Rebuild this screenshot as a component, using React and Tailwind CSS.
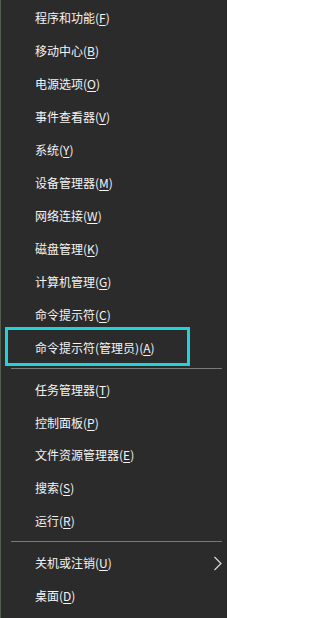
const groups = [
  [
    ['程序和功能', 'F'],
    ['移动中心', 'B'],
    ['电源选项', 'O'],
    ['事件查看器', 'V'],
    ['系统', 'Y'],
    ['设备管理器', 'M'],
    ['网络连接', 'W'],
    ['磁盘管理', 'K'],
    ['计算机管理', 'G'],
    ['命令提示符', 'C'],
    ['命令提示符(管理员)', 'A', true],
  ],
  [
    ['任务管理器', 'T'],
    ['控制面板', 'P'],
    ['文件资源管理器', 'E'],
    ['搜索', 'S'],
    ['运行', 'R'],
  ],
  [
    ['关机或注销', 'U', false, true],
    ['桌面', 'D'],
  ],
]

const MenuItem = ({ label, hotkey, highlight, submenu, tall }) => (
  <div
    className={`relative flex items-center pl-[34px] pr-[4px] ${tall ? 'h-[33px]' : 'h-[32.6px]'}`}
  >
    {/* annotation box around the admin entry */}
    {highlight && (
      <div className="absolute left-[4px] top-[-4px] w-[185px] h-[39px] border-[3px] border-[#1fd3d9]" />
    )}
    <span className="text-[12px] leading-none text-[#f4f4f4] whitespace-nowrap">
      {label}(<span className="underline underline-offset-2">{hotkey}</span>)
    </span>
    {submenu && (
      <svg
        className="absolute left-[212px] top-[9px]"
        width="10"
        height="15"
        viewBox="0 0 10 15"
        fill="none"
      >
        <path d="M1.5 1 L8 7.5 L1.5 14" stroke="#d8d8d8" strokeWidth="1.2" />
      </svg>
    )}
  </div>
)

const Separator = () => (
  <div className="h-[10px] pt-[4px] pl-[10px] pr-[5px]">
    <div className="h-px bg-[#7a7a7a]" />
  </div>
)

export default function App() {
  return (
    <div
      className="w-[227px] h-[618px] bg-[#2b2b2b] border-l border-[#52614f] pt-px overflow-hidden"
      style={{ fontFamily: '"Noto Sans CJK SC", "Noto Sans", sans-serif' }}
    >
      {groups.map((items, gi) => (
        <div key={gi}>
          {gi > 0 && <Separator />}
          {items.map(([label, hotkey, highlight, submenu]) => (
            <MenuItem
              key={label}
              label={label}
              hotkey={hotkey}
              highlight={highlight}
              submenu={submenu}
              tall={gi === 0}
            />
          ))}
        </div>
      ))}
    </div>
  )
}
